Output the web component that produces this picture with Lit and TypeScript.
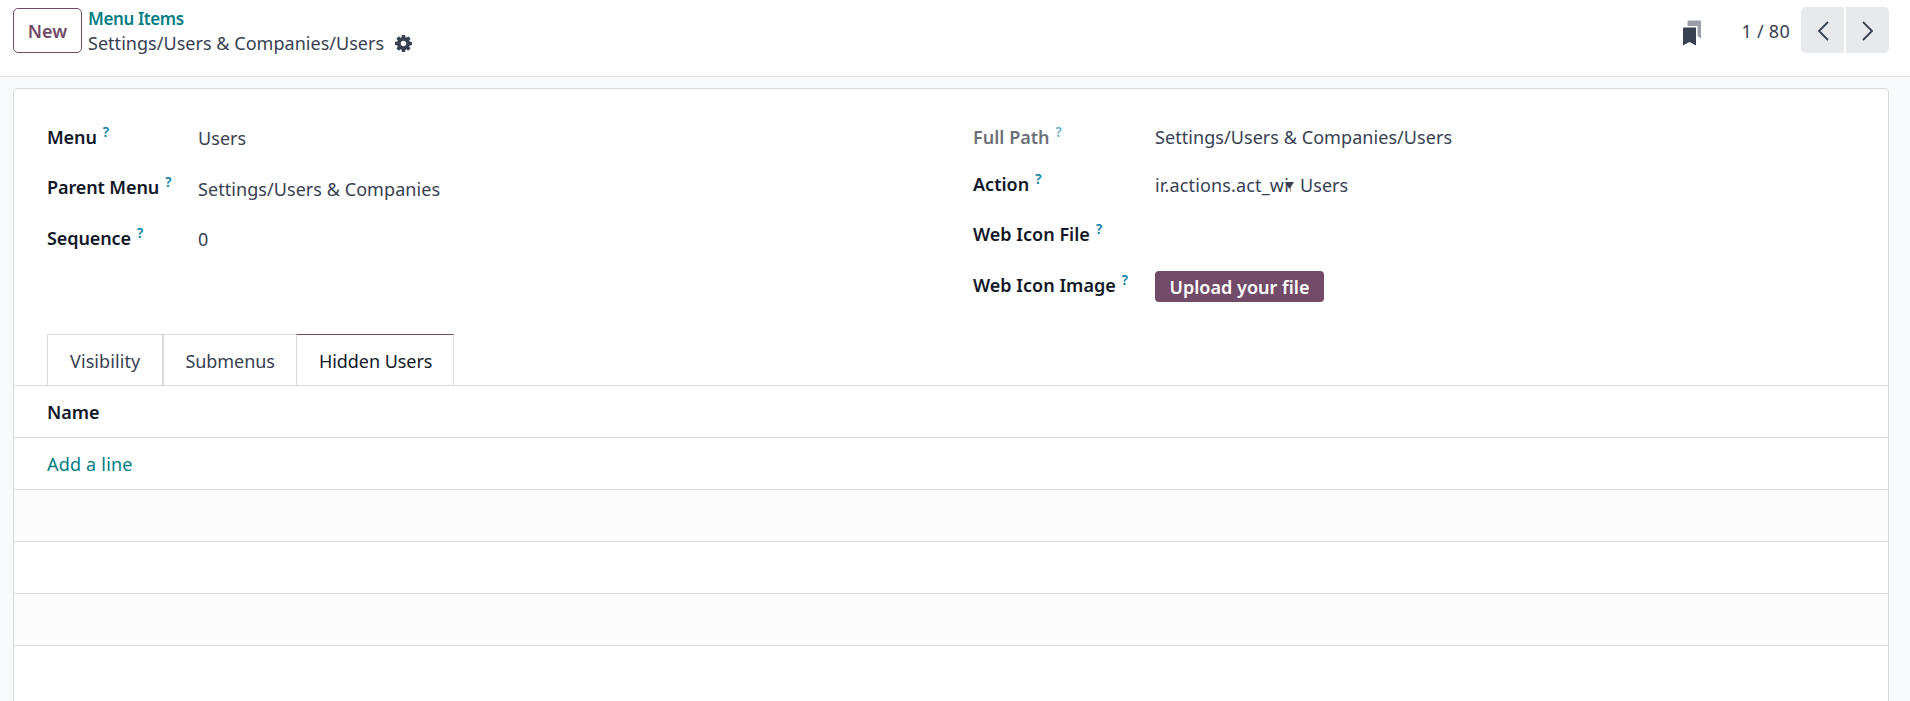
import { LitElement, html, css, svg } from "lit";
import { customElement, state } from "lit/decorators.js";
import { classMap } from "lit/directives/class-map.js";

const cog = svg`<path d="M1024 896q0-106-75-181t-181-75-181 75-75 181 75 181 181 75 181-75 75-181zm512-109v222q0 12-8 23t-20 13l-185 28q-19 54-39 91 35 50 107 138 10 12 10 25t-9 23q-27 37-99 108t-94 71q-12 0-26-9l-138-108q-44 23-91 38-16 136-29 186-7 28-36 28h-222q-14 0-24.5-8.5t-11.5-21.5l-28-184q-49-16-90-37l-141 107q-10 9-25 9-14 0-25-11-126-114-165-168-7-10-7-23 0-12 8-23 15-21 51-66.5t54-70.5q-27-50-41-99l-183-27q-13-2-21-12.5t-8-23.5v-222q0-12 8-23t19-13l186-28q14-46 39-92-40-57-107-138-10-12-10-24 0-10 9-23 26-36 98.5-107.5t94.5-71.5q13 0 26 10l138 107q44-23 91-38 16-136 29-186 7-28 36-28h222q14 0 24.5 8.5t11.5 21.5l28 184q49 16 90 37l142-107q9-9 24-9 13 0 25 10 129 119 165 170 7 8 7 22 0 12-8 23-15 21-51 66.5t-54 70.5q26 50 41 98l183 28q13 2 21 12.5t8 23.5z"/>`;

@customElement("control-bar")
class ControlBar extends LitElement {
  static styles = css`
    :host {
      display: flex;
      align-items: flex-start;
      box-sizing: border-box;
      height: 77px;
      padding: 7px 21px 0 13px;
      background: #fff;
      border-bottom: 1px solid #d8dadd;
      color: #374151;
    }
    button {
      font: inherit;
      margin: 0;
      padding: 0;
      border: 0;
      cursor: pointer;
    }
    .new {
      width: 69px;
      height: 45px;
      margin-top: 1px;
      border: 1px solid #714b67;
      border-radius: 5px;
      background: #fff;
      color: #714b67;
      font-weight: 600;
    }
    .crumbs {
      display: flex;
      flex-direction: column;
      margin-left: 6px;
      line-height: 24px;
    }
    .parent {
      color: #017e84;
      font-size: 17px;
      font-weight: 600;
      letter-spacing: -0.39px;
    }
    .current {
      display: flex;
      align-items: center;
      height: 24px;
      gap: 11px;
      letter-spacing: 0.03px;
    }
    .cog {
      width: 17px;
      height: 17px;
      fill: #374151;
    }
    .pager {
      display: flex;
      align-items: center;
      height: 46px;
      margin-left: auto;
    }
    .marks {
      width: 18px;
      height: 26px;
      margin-right: 40px;
      margin-top: 5px;
    }
    .count {
      margin-right: 11px;
      padding-top: 1px;
      letter-spacing: 0.27px;
    }
    .nav {
      display: flex;
      gap: 2px;
    }
    .step {
      display: grid;
      place-items: center;
      width: 43px;
      height: 46px;
      background: #e7e9ed;
    }
    .prev {
      border-radius: 5px 0 0 5px;
    }
    .next {
      border-radius: 0 5px 5px 0;
    }
    .step svg {
      width: 12px;
      height: 20px;
      margin-top: 2px;
      fill: none;
      stroke: #374151;
      stroke-width: 1.8;
    }
  `;
  render() {
    return html`
      <button class="new">New</button>
      <div class="crumbs">
        <span class="parent">Menu Items</span>
        <span class="current">Settings/Users &amp; Companies/Users<svg class="cog" viewBox="0 128 1536 1536">${cog}</svg></span>
      </div>
      <div class="pager">
        <svg class="marks" viewBox="0 0 18 26">
          <path d="M4.5 6V1.5Q4.5.5 5.5.5H17q1 0 1 1V18.5l-3.5-2.5V6z" fill="#9b9fa8" />
          <path d="M0 8.5Q0 7.5 1 7.5H13V25.5L6.5 22 0 25.5z" fill="#374151" />
        </svg>
        <span class="count">1 / 80</span>
        <div class="nav">
          <button class="step prev"><svg viewBox="0 0 12 20"><path d="M11 1 2 10l9 9" /></svg></button>
          <button class="step next"><svg viewBox="0 0 12 20"><path d="M1 1l9 9-9 9" /></svg></button>
        </div>
      </div>
    `;
  }
}

@customElement("menu-form")
class MenuForm extends LitElement {
  static styles = css`
    :host {
      display: grid;
      grid-template-columns: 926px 1fr;
      box-sizing: border-box;
      height: 245px;
      padding: 34px 33px 0;
      line-height: 28px;
      color: #374151;
    }
    .row {
      display: grid;
      grid-template-columns: 151px 1fr;
      align-items: start;
      height: 50px;
      letter-spacing: 0.06px;
    }
    .right .row {
      grid-template-columns: 182px 1fr;
    }
    .right .short {
      height: 47px;
    }
    .tall {
      height: 51px;
    }
    .label {
      color: #111827;
      font-weight: 600;
      white-space: nowrap;
    }
    .left .label {
      letter-spacing: -0.1px;
    }
    .right .label {
      letter-spacing: 0.02px;
    }
    .muted {
      opacity: 0.62;
    }
    .help {
      display: inline-block;
      margin-left: 6px;
      transform: translateY(-7.5px);
      color: #0180a5;
      font-size: 13.5px;
      line-height: 14px;
    }
    .drop {
      padding-top: 1px;
    }
    .drop2 {
      padding-top: 2px;
    }
    .action {
      display: flex;
      gap: 6px;
    }
    .select {
      position: relative;
      width: 139px;
    }
    .picked {
      width: 136px;
      overflow: hidden;
      white-space: nowrap;
      letter-spacing: 0.15px;
    }
    .caret {
      position: absolute;
      right: 0;
      top: 11px;
      width: 9px;
      height: 7px;
      fill: #374151;
    }
    .upload {
      width: 169px;
      height: 31px;
      padding: 1px 0 0;
      border: 0;
      border-radius: 4px;
      background: #714b67;
      color: #fff;
      font: inherit;
      font-weight: 600;
      line-height: 30px;
      letter-spacing: 0.02px;
      cursor: pointer;
    }
  `;
  private label(text: string, muted = false) {
    return html`<span class=${classMap({ label: true, muted })}>${text}<span class="help">?</span></span>`;
  }
  render() {
    return html`
      <div class="left">
        <div class="row">${this.label("Menu")}<span class="drop">Users</span></div>
        <div class="row tall">${this.label("Parent Menu")}<span class="drop2">Settings/Users &amp; Companies</span></div>
        <div class="row">${this.label("Sequence")}<span class="drop">0</span></div>
      </div>
      <div class="right">
        <div class="row short">${this.label("Full Path", true)}<span>Settings/Users &amp; Companies/Users</span></div>
        <div class="row">
          ${this.label("Action")}
          <div class="action drop">
            <div class="select">
              <div class="picked">ir.actions.act_window</div>
              <svg class="caret" viewBox="0 0 9 7"><path d="M0 0h9L4.5 7z" /></svg>
            </div>
            <span>Users</span>
          </div>
        </div>
        <div class="row tall">${this.label("Web Icon File")}</div>
        <div class="row">${this.label("Web Icon Image")}<button class="upload">Upload your file</button></div>
      </div>
    `;
  }
}

@customElement("form-notebook")
class FormNotebook extends LitElement {
  @state() private active = 2;
  private tabs = ["Visibility", "Submenus", "Hidden Users"];
  static styles = css`
    :host {
      display: block;
      color: #374151;
    }
    .tabs {
      display: flex;
      padding-left: 33px;
      height: 51px;
      border-bottom: 1px solid #d8dadd;
    }
    .tab {
      box-sizing: border-box;
      height: 51px;
      padding: 1px 21px 0;
      border: 1px solid #d8dadd;
      border-bottom: 0;
      line-height: 50px;
      letter-spacing: -0.05px;
      cursor: pointer;
    }
    .tab:first-child {
      padding: 1px 22px 0;
      letter-spacing: 0.1px;
    }
    .tab.active {
      margin-left: -1px;
      padding-left: 22px;
      border-top-color: #714b67;
      background: #fff;
      color: #111827;
    }
    .line {
      box-sizing: border-box;
      height: 52px;
      padding-left: 33px;
      border-bottom: 1px solid #d8dadd;
      line-height: 52px;
    }
    .head {
      color: #111827;
      font-weight: 600;
    }
    .add {
      color: #017e84;
      letter-spacing: 0.2px;
    }
    .odd {
      background: #fcfcfc;
    }
  `;
  render() {
    return html`
      <div class="tabs">
        ${this.tabs.map(
          (t, i) => html`<div class=${classMap({ tab: true, active: i === this.active })} @click=${() => (this.active = i)}>${t}</div>`
        )}
      </div>
      <div class="line head">Name</div>
      <div class="line add">Add a line</div>
      <div class="line odd"></div>
      <div class="line"></div>
      <div class="line odd"></div>
    `;
  }
}

@customElement("app-root")
class AppRoot extends LitElement {
  static styles = css`
    :host {
      display: flex;
      flex-direction: column;
      height: 701px;
      overflow: hidden;
      background: #f9fafb;
      font: 18px "Noto Sans", "Open Sans", sans-serif;
      font-variant-ligatures: none;
    }
    .sheet {
      display: flex;
      flex-direction: column;
      flex: 1;
      margin: 11px 21px 0 13px;
      border: 1px solid #d8dadd;
      border-bottom: 0;
      border-radius: 5px 5px 0 0;
      background: #fff;
    }
  `;
  render() {
    return html`
      <control-bar></control-bar>
      <main class="sheet">
        <menu-form></menu-form>
        <form-notebook></form-notebook>
      </main>
    `;
  }
}
